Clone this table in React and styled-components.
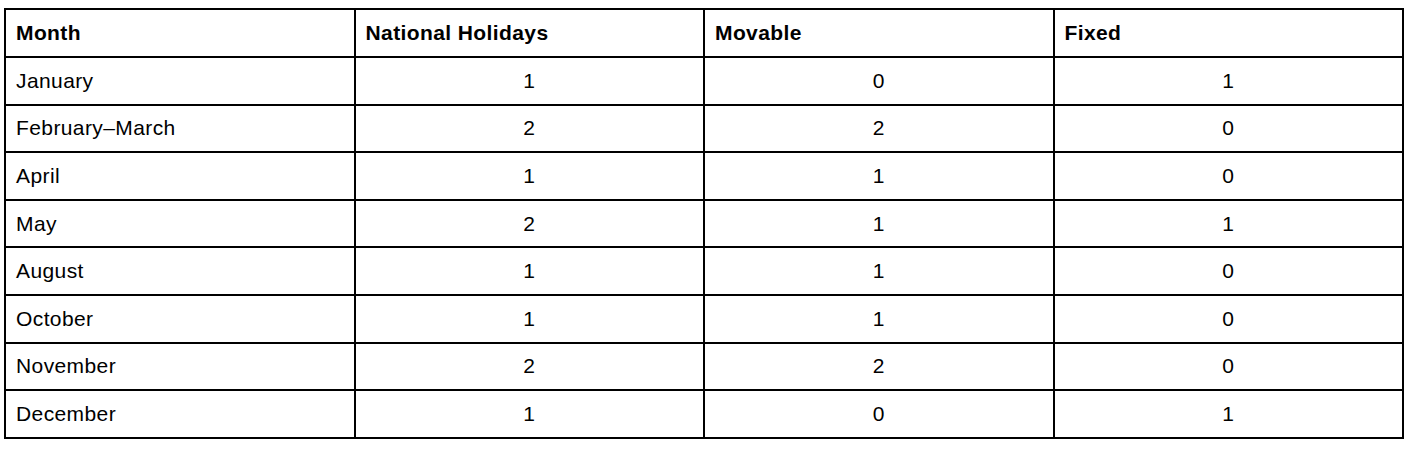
import React from 'react';
import styled, { createGlobalStyle } from 'styled-components';

const GlobalStyle = createGlobalStyle`
body {
  margin: 0;
  background: #fff;
  font-family: 'Liberation Sans', Arial, Helvetica, sans-serif;
  color: #000;
}
`

const Wrapper = styled.div`
padding: 8px 10px 0 4px;
`

const Table = styled.table`
width: 1400px;
border-collapse: collapse;
table-layout: fixed;
border: 2px solid #000;
`

const Cell = styled.td`
border: 2px solid #000;
height: 45.6px;
padding: 0 10px;
font-size: 21px;
letter-spacing: 0.4px;
text-align: ${props => props.center ? 'center' : 'left'};
vertical-align: middle;
`

const HeadCell = styled(Cell).attrs({ as: 'th' })`
height: 46px;
font-weight: bold;
text-align: left;
`

const rows = [
    ['January', 1, 0, 1],
    ['February–March', 2, 2, 0],
    ['April', 1, 1, 0],
    ['May', 2, 1, 1],
    ['August', 1, 1, 0],
    ['October', 1, 1, 0],
    ['November', 2, 2, 0],
    ['December', 1, 0, 1],
];

export default function App() {
    return (
        <Wrapper>
            <GlobalStyle />
            <Table>
                <thead>
                    <tr>
                        <HeadCell>Month</HeadCell>
                        <HeadCell>National Holidays</HeadCell>
                        <HeadCell>Movable</HeadCell>
                        <HeadCell>Fixed</HeadCell>
                    </tr>
                </thead>
                <tbody>
                    {rows.map(r => (
                        <tr key={r[0]}>
                            <Cell>{r[0]}</Cell>
                            <Cell center>{r[1]}</Cell>
                            <Cell center>{r[2]}</Cell>
                            <Cell center>{r[3]}</Cell>
                        </tr>
                    ))}
                </tbody>
            </Table>
        </Wrapper>
    );
}
